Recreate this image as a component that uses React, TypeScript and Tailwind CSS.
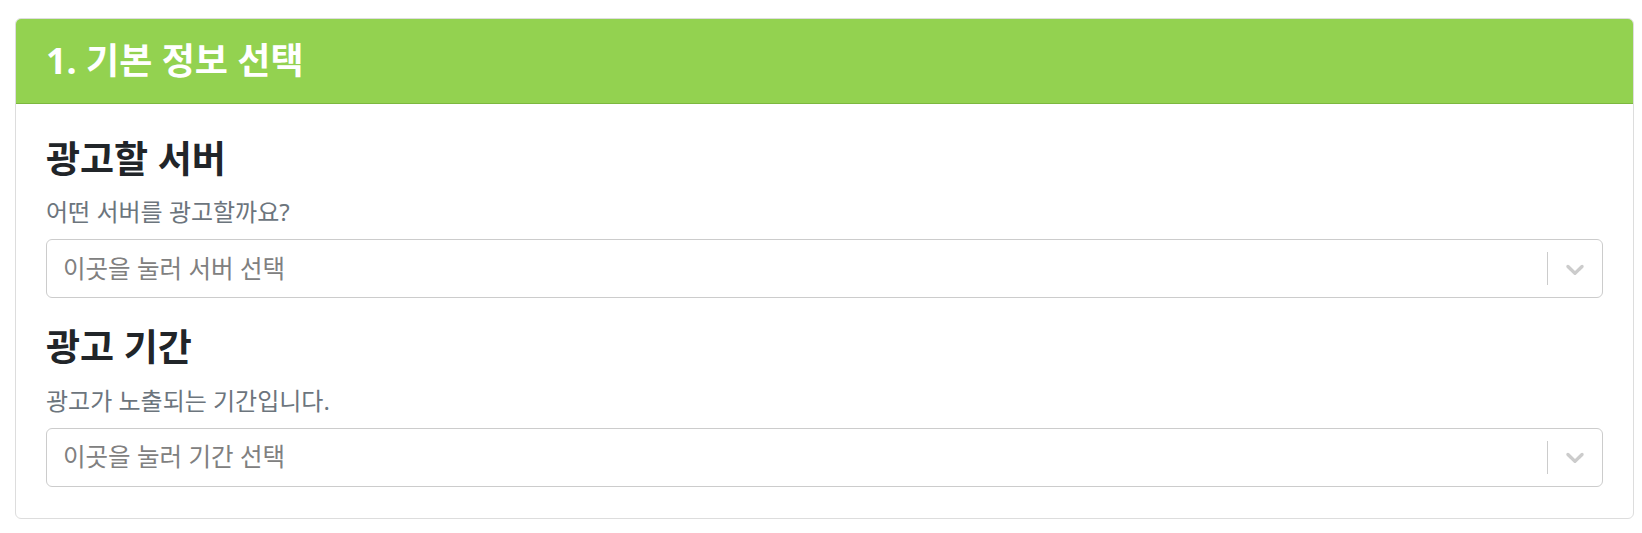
import React from "react";

const font = { fontFamily: "'Noto Sans', 'Noto Sans CJK KR', sans-serif" };

const Chevron = () => (
  <svg viewBox="0 0 20 20" className="h-[30px] w-[30px] fill-[#cccccc]">
    <path d="M4.516 7.548c0.436-0.446 1.043-0.481 1.576 0l3.908 3.747 3.908-3.747c0.533-0.481 1.141-0.446 1.574 0 0.436 0.445 0.408 1.197 0 1.615-0.406 0.418-4.695 4.502-4.695 4.502-0.217 0.223-0.502 0.335-0.787 0.335s-0.57-0.112-0.789-0.335c0 0-4.287-4.084-4.695-4.502s-0.436-1.17 0-1.615z" />
  </svg>
);

const SelectBox = ({ placeholder }: { placeholder: string }) => (
  <div className="flex h-[59px] items-center rounded-[6px] border border-[#cccccc] bg-white">
    <div className="flex-1 pl-[16px] text-[24.5px] text-[#808080]">{placeholder}</div>
    <div className="flex items-center self-stretch">
      <span className="my-[12px] w-px self-stretch bg-[#cccccc]" />
      <div className="px-[12px]">
        <Chevron />
      </div>
    </div>
  </div>
);

const Field = ({ title, desc, placeholder }: { title: string; desc: string; placeholder: string }) => (
  <div>
    <h3 className="text-[37px] font-bold leading-[1.2] text-[#212529]">{title}</h3>
    <p className="mt-[13px] text-[24px] leading-[1.5] text-[#6c757d]">{desc}</p>
    <div className="mt-[9px]">
      <SelectBox placeholder={placeholder} />
    </div>
  </div>
);

export default function App() {
  return (
    <div className="min-h-screen bg-white pt-[18px] pb-[16px] pl-[15px] pr-[8px]" style={font}>
      <div className="overflow-hidden rounded-[6px] border border-[#dddddd]">
        <div className="flex h-[85px] items-center border-b border-[#7cb83f] bg-[#93d250] px-[30px]">
          <h2 className="text-[36px] font-bold text-white">1. 기본 정보 선택</h2>
        </div>
        <div className="flex flex-col gap-[27px] px-[30px] pt-[33px] pb-[31px]">
          <Field title="광고할 서버" desc="어떤 서버를 광고할까요?" placeholder="이곳을 눌러 서버 선택" />
          <Field title="광고 기간" desc="광고가 노출되는 기간입니다." placeholder="이곳을 눌러 기간 선택" />
        </div>
      </div>
    </div>
  );
}
